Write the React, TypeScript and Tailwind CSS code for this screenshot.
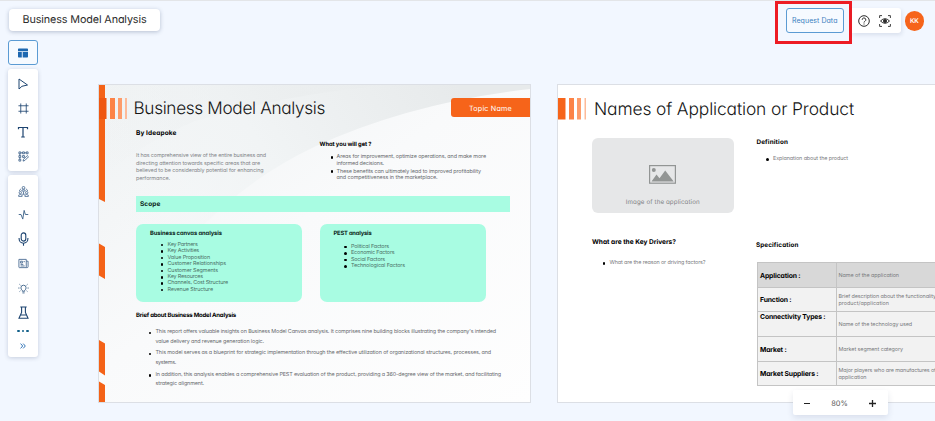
import { useLayoutEffect, useRef, useState, type ReactNode } from "react";
import clsx from "clsx";

type LineProps = { children: string; w: number; className?: string };

/** One line of text, tracked so that it spans the given width. */
function Line({ children, w, className }: LineProps) {
  const ref = useRef<HTMLSpanElement>(null);
  const [spacing, setSpacing] = useState(0);
  useLayoutEffect(() => {
    const el = ref.current;
    if (!el) return;
    el.style.letterSpacing = "0px";
    const natural = el.getBoundingClientRect().width;
    const next = (w - natural) / children.length;
    el.style.letterSpacing = `${next}px`;
    setSpacing(next);
  }, [children, w]);
  return (
    <div className={clsx("whitespace-nowrap", className)}>
      <span ref={ref} className="inline-block align-top" style={{ letterSpacing: spacing }}>
        {children}
      </span>
    </div>
  );
}

type Row = [string, number];

function Bullet({ lines, className, gap = "w-[6px]" }: { lines: Row[]; className: string; gap?: string }) {
  return (
    <li className={clsx("flex", className)}>
      <span className={clsx("-ml-[0.500px] flex h-[1lh] shrink-0 items-center pr-[0.500px]", gap)}>
        <span className="size-[2.600px] rounded-full bg-black" />
      </span>
      <div>
        {lines.map(([t, w]) => (
          <Line key={t} w={w}>{t}</Line>
        ))}
      </div>
    </li>
  );
}

function Icon({ children, className, size = "size-3" }: { children: ReactNode; className?: string; size?: string }) {
  return (
    <svg viewBox="0 0 12 12" fill="none" stroke="currentColor" strokeWidth="1" className={clsx("shrink-0", size, className)}>
      {children}
    </svg>
  );
}

function Tool({ h, children }: { h: string; children: ReactNode }) {
  return <button className={clsx("flex w-full shrink-0 items-center justify-center", h)}>{children}</button>;
}

function Sidebar() {
  return (
    <nav className="flex w-[30px] shrink-0 flex-col text-[#1d4470]">
      <button className="flex h-[25px] items-center justify-center rounded-[3px] border border-[#5b9bd3] bg-[#f6faff] text-[#1d67b0]">
        <svg viewBox="0 0 10 10" fill="currentColor" className="size-[10px]">
          <path d="M0 1.200Q0 .5.7.5h8.600q.7 0 .7.7v2H0zM0 4h3.800v5.500H.7Q0 9.500 0 8.800zM4.700 4H10v4.800q0 .7-.7.7H4.700z" />
        </svg>
      </button>

      <div className="mt-1 flex h-[102px] flex-col rounded-[3px] bg-white pt-[3px] shadow-[0_1px_4px_rgba(40,60,100,0.22)]">
        <Tool h="h-6">
          <Icon><path d="M2 1v10l2.900-2.700L10.500 7z" strokeLinejoin="round" /></Icon>
        </Tool>
        <Tool h="h-6">
          <Icon size="size-[11px]"><path d="M3 .5v11M9 .5v11M.5 3h11M.5 9h11" strokeWidth=".9" /></Icon>
        </Tool>
        <Tool h="h-6">
          <Icon><path d="M1.500 3.300V1.500h9v1.800M6 1.500v9.500M4.200 11h3.600" strokeWidth="1.200" /></Icon>
        </Tool>
        <Tool h="h-6">
          <Icon size="size-[11px]" className="text-[#3a5f88]">
            <path d="M1 1h2v2H1zM5 1h2v2H5zM9 1h2v2H9zM1 5h2v2H1zM1 9h2v2H1zM5 5h2v2H5zM3 2h2M7 2h2M2 3v2M2 7v2" strokeWidth=".9" />
            <path d="M5.500 11l.6-2 4-4 1.400 1.300-4 4z" strokeWidth=".9" />
          </Icon>
        </Tool>
      </div>

      <div className="mt-1 flex h-[182px] flex-col rounded-[3px] bg-white pt-[4px] shadow-[0_1px_4px_rgba(40,60,100,0.22)]">
        <Tool h="h-[24px]">
          <Icon className="text-[#4f7096]" size="size-[11px]">
            <circle cx="6" cy="1.900" r="1.400" />
            <circle cx="2.500" cy="7.300" r="1.300" />
            <circle cx="9.500" cy="7.300" r="1.300" />
            <path d="M4 5.500q0-1.700 2-1.700t2 1.700zM.7 11.400V10q1.800-1.500 3.800 0v1.400zM7.500 11.400V10q1.800-1.500 3.800 0v1.400zM3.500 3Q1.500 4 1.500 5.500M8.500 3q2 1 2 2.500M4.500 9h3M6 5.800V9" strokeWidth=".9" />
          </Icon>
        </Tool>
        <Tool h="h-[23px]">
          <Icon className="text-[#3d6289]" size="size-[11px]"><path d="M.8 6h2.500L5.200 11 6.700 1.500 8 6h3.200" /></Icon>
        </Tool>
        <Tool h="h-[25px]">
          <svg viewBox="0 0 12 15" fill="none" stroke="currentColor" strokeWidth="1.200" className="h-[14px] w-[11px]">
            <rect x="3.500" y=".8" width="5" height="9" rx="2.500" />
            <path d="M1.200 6.500v.8a4.800 4.800 0 0 0 9.600 0v-.8M6 12.200V14.800" />
          </svg>
        </Tool>
        <Tool h="h-[25px]">
          <Icon className="text-[#4f7096]" size="size-[11px]">
            <path d="M1 1.500h8v9H1.500Q1 10.500 1 10zM9 3.500h2v6q0 1-1 1H9M2.800 3.500h2v2h-2zM2.800 7h3M2.800 8.700h4.500M6 4h1.500" />
          </Icon>
        </Tool>
        <Tool h="h-[24px]">
          <Icon className="text-[#3d6289]" size="size-[11px]">
            <path d="M4.700 9V8Q3.200 7 3.200 5.200a2.800 2.800 0 0 1 5.600 0Q8.800 7 7.300 8v1zM4.800 10.800h2.400M.3 5.500h1.300M10.400 5.500h1.300M1.600 1.400l1 1M10.400 1.400l-1 1M1.700 9.300l.9-.8M10.300 9.300l-.9-.8" />
          </Icon>
        </Tool>
        <Tool h="h-[24px]">
          <svg viewBox="0 0 11 13" fill="none" stroke="currentColor" strokeWidth="1.100" className="h-[13px] w-[11px]">
            <path d="M2.300 1h6.400M3.600 1v5.500L1 12.200h9L7.400 6.500V1M2.300 9h6.400" />
          </svg>
        </Tool>
        <Tool h="h-[14px]">
          <span className="flex gap-[2px]">
            <i className="size-[2.400px] rounded-full bg-[#12608a]" />
            <i className="size-[2.400px] rounded-full bg-[#12608a]" />
            <i className="size-[2.400px] rounded-full bg-[#12608a]" />
          </span>
        </Tool>
        <Tool h="h-[16px]">
          <svg viewBox="0 0 6 6" fill="none" stroke="#1d67b0" strokeWidth=".9" className="size-[6px]">
            <path d="M.6.6 2.700 3 .6 5.400M3.200.6 5.300 3 3.200 5.400" />
          </svg>
        </Tool>
      </div>
    </nav>
  );
}

const canvasItems: Row[] = [
  ["Key Partners", 30],
  ["Key Activities", 31.5],
  ["Value Proposition", 42.5],
  ["Customer Relationships", 58.5],
  ["Customer Segments", 50.5],
  ["Key Resources", 35.5],
  ["Channels, Cost Structure", 60.5],
  ["Revenue Structure", 45.5],
];

const pestItems: Row[] = [
  ["Political Factors", 38],
  ["Economic Factors", 43.5],
  ["Social Factors", 34],
  ["Technological Factors", 54],
];

const briefItems: Row[][] = [
  [
    ["This report offers valuable insights on Business Model Canvas analysis. It comprises nine building blocks illustrating the company's intended", 340.5],
    ["value delivery and revenue generation logic.", 108.5],
  ],
  [
    ["This model serves as a blueprint for strategic implementation through the effective utilization of organizational structures, processes, and", 335.5],
    ["systems.", 20.5],
  ],
  [
    ["In addition, this analysis enables a comprehensive PEST evaluation of the product, providing a 360-degree view of the market, and facilitating", 345.5],
    ["strategic alignment.", 48.5],
  ],
];

function SlideOne() {
  return (
    <section className="relative mt-[44px] h-[319px] w-[433px] shrink-0 overflow-hidden border border-[#dcdfe5] bg-[#fafbfc]">
      <svg viewBox="0 0 431 317" className="absolute inset-0 h-full w-full">
        <defs>
          <linearGradient id="sheet" x1="0" y1="0" x2="1" y2="1">
            <stop offset="0" stopColor="#eff2f3" />
            <stop offset=".45" stopColor="#f9fafb" />
            <stop offset="1" stopColor="#fefefe" />
          </linearGradient>
          <linearGradient id="swoosh" gradientUnits="userSpaceOnUse" x1="60" y1="200" x2="360" y2="0">
            <stop offset="0" stopColor="#f2f5f6" stopOpacity="0" />
            <stop offset=".45" stopColor="#f1f4f5" />
            <stop offset="1" stopColor="#e7eaeb" />
          </linearGradient>
          <linearGradient id="corner" gradientUnits="userSpaceOnUse" x1="0" y1="110" x2="200" y2="0">
            <stop offset="0" stopColor="#eef1f2" stopOpacity="0" />
            <stop offset="1" stopColor="#eaedee" />
          </linearGradient>
        </defs>
        <rect width="431" height="317" fill="url(#sheet)" />
        <path d="M0 0H431V4Q310 18 215 62 110 112 40 220H0z" fill="url(#swoosh)" />
        <path d="M0 0H300Q205 5 96 36 40 60 6 90H0z" fill="url(#corner)" opacity=".7" />
        <g fill="#f46217">
          <path d="M0 0h6v117l-6-3zM0 158.500l6 3.500v32l-6-3.500zM0 255l6 3.500v32L0 286.500zM0 296.500l6 3.500v18H0z" />
        </g>
        <path d="M0 13h7.500v21H0z" fill="#ef5711" />
        <path d="M11 13h5v21h-5z" fill="#fc8347" />
        <path d="M19 13h4v21h-4z" fill="#fd9c6b" />
        <path d="M26 13h2v21h-2z" fill="#fdbb9a" />
      </svg>

      <div className="relative flex h-full flex-col">
        <div className="flex h-[35px] items-start pt-[11px] pl-[34.500px]">
          <Line w={191.5} className="pt-px text-[17.200px]/[24px] font-light text-[#151515]">Business Model Analysis</Line>
          <div className="mt-[2px] ml-auto flex h-[19px] w-[79.500px] items-center rounded-l-[3px] bg-[#f6641a] pl-[18.500px]">
            <Line w={43} className="pt-[2px] text-[7.200px]/[10px] text-white">Topic Name</Line>
          </div>
        </div>

        <div className="flex h-[76px] pl-[37px]">
          <div className="w-[183.500px]">
            <Line w={40.5} className="mt-[9px] text-[6.500px]/[8px] font-bold text-black">By Ideapoke</Line>
            <div className="mt-[16px] text-[5.400px]/[7.700px] text-[#808386]">
              <Line w={130}>It has comprehensive view of the entire business and</Line>
              <Line w={124}>directing attention towards specific areas that are</Line>
              <Line w={127.5}>believed to be considerably potential for enhancing</Line>
              <Line w={34}>performance.</Line>
            </div>
          </div>
          <div>
            <Line w={52} className="mt-[21px] text-[5.800px]/[8px] font-bold text-black">What you will get ?</Line>
            <ul className="mt-[5px] flex flex-col gap-[1.500px] pl-[11.500px] text-[#66696c]">
              <Bullet
                className="text-[5.400px]/[6.500px]"
                lines={[["Areas for improvement, optimize operations, and make more", 149.5], ["informed decisions.", 47.5]]}
              />
              <Bullet
                className="text-[5.400px]/[6.500px]"
                lines={[["These benefits can ultimately lead to improved profitability", 144.5], ["and competitiveness in the marketplace.", 101]]}
              />
            </ul>
          </div>
        </div>

        <div className="ml-[37px] h-4 w-[373.500px] bg-[#a8fce2] pt-1 pl-1">
          <Line w={20.5} className="text-[6.500px]/[8px] font-bold text-[#0d1f1a]">Scope</Line>
        </div>

        <div className="mt-3 ml-[37px] flex gap-[17.500px]">
          <div className="h-[77.500px] w-[166px] rounded-[7px] bg-[#a8fce2] pt-[6px] pl-[14px]">
            <Line w={72} className="text-[5.800px]/[8px] font-bold text-[#0d1f1a]">Business canvas analysis</Line>
            <ul className="mt-[4px] pl-[11px] text-[#4a6f64]">
              {canvasItems.map((row) => (
                <Bullet key={row[0]} gap="w-[7px]" className="text-[5.400px]/[6.400px]" lines={[row]} />
              ))}
            </ul>
          </div>
          <div className="h-[77.500px] w-[166px] rounded-[7px] bg-[#a8fce2] pt-[6px] pl-[14px]">
            <Line w={38} className="text-[5.800px]/[8px] font-bold text-[#0d1f1a]">PEST analysis</Line>
            <ul className="mt-[6px] pl-[11px] text-[#4a6f64]">
              {pestItems.map((row) => (
                <Bullet key={row[0]} gap="w-[7px]" className="text-[5.400px]/[6.400px]" lines={[row]} />
              ))}
            </ul>
          </div>
        </div>

        <Line w={100} className="mt-[10.500px] ml-[37px] text-[6px]/[8px] font-bold text-black">Brief about Business Model Analysis</Line>
        <ul className="mt-[8px] ml-[50px] flex flex-col gap-[2.100px] text-[#66696c]">
          {briefItems.map((lines) => (
            <Bullet key={lines[0][0]} gap="w-[7px]" className="text-[5.400px]/[9.600px]" lines={lines} />
          ))}
        </ul>
      </div>
    </section>
  );
}

const specRows: { label: Row; value: Row[]; box: string; top?: boolean }[] = [
  { label: ["Application :", 40.5], value: [["Name of the application", 60.5]], box: "h-[25px] bg-[#d8d8d8]" },
  { label: ["Function :", 31.5], value: [["Brief description about the functionality", 97.5], ["product/application", 50.5]], box: "h-[24px] bg-[#f2f2f2]" },
  { label: ["Connectivity Types :", 65.5], value: [["Name of the technology used", 73.5]], box: "h-[25px] bg-[#f2f2f2]", top: true },
  { label: ["Market :", 26.5], value: [["Market segment category", 64.5]], box: "h-[25px] bg-[#f2f2f2]" },
  { label: ["Market Suppliers :", 58.5], value: [["Major players who are manufactures of", 97.5], ["application", 28]], box: "h-[24px] bg-[#f2f2f2]" },
];

function SlideTwo() {
  return (
    <section className="relative mt-[44px] ml-[26px] h-[319px] w-[433px] shrink-0 overflow-hidden border border-[#dcdfe5] bg-white">
      <svg viewBox="0 0 29 22" className="absolute top-[13px] left-0 h-[22px] w-[29px]">
        <path d="M0 0h7.500v21.500H0z" fill="#f6641a" />
        <path d="M11 0h5v21.500h-5z" fill="#fc8347" />
        <path d="M19 0h4v21.500h-4z" fill="#fd9c6b" />
        <path d="M26.500 0H28v21.500h-1.500z" fill="#fdbb9a" />
      </svg>

      <Line w={260} className="pt-[13px] pl-[36px] text-[17.400px]/[24px] font-light text-[#151515]">Names of Application or Product</Line>

      <div className="flex pl-[33.500px]">
        <div className="w-[165px] shrink-0">
          <div className="mt-[16px] flex h-[75px] w-[142.500px] flex-col items-center rounded-[6px] bg-[#e6e7e8]">
            <svg viewBox="0 0 27 19" className="mt-[26.500px] h-[19px] w-[27px]">
              <rect x=".6" y=".6" width="25.800" height="17.600" fill="none" stroke="#929594" strokeWidth="1.200" />
              <circle cx="4.800" cy="5" r="2" fill="#929594" />
              <path d="M2.500 16.500 7.500 9.500l3 3.700 5.700-7.700 8.500 11z" fill="#929594" />
            </svg>
            <Line w={74} className="mt-[14px] text-[6.200px]/[9px] text-[#7e8183]">Image of the application</Line>
          </div>
          <Line w={84} className="mt-[25px] pl-[0.500px] text-[6.600px]/[8px] font-bold text-black">What are the Key Drivers?</Line>
          <ul className="mt-[14px] pl-[11.500px] text-[#77797c]">
            <Bullet gap="w-[7px]" className="text-[5.400px]/[7px]" lines={[["What are the reason or driving factors?", 96]]} />
          </ul>
        </div>

        <div className="shrink-0">
          <Line w={31.5} className="mt-[15.500px] text-[6.300px]/[8px] font-bold text-black">Definition</Line>
          <ul className="mt-[10.500px] pl-[10px] text-[#77797c]">
            <Bullet gap="w-[7px]" className="text-[5.400px]/[7px]" lines={[["Explanation about the product", 75]]} />
          </ul>
          <Line w={42.5} className="mt-[78px] -ml-[0.500px] text-[6.300px]/[8px] font-bold text-black">Specification</Line>
          <div className="mt-[13px] w-[221px] border-t border-l border-[#c4c4c4]">
            {specRows.map(({ label, value, box, top }) => (
              <div key={label[0]} className={clsx("flex border-b border-[#c4c4c4]", box)}>
                <div className={clsx("flex w-[79px] border-r border-[#c4c4c4] pl-[2.500px]", top ? "items-start" : "items-center")}>
                  <Line w={label[1]} className="text-[6.800px]/[9px] font-bold text-black">{label[0]}</Line>
                </div>
                <div className="flex flex-col justify-center pt-[2px] pl-[2px] text-[5.400px]/[6.800px] text-[#77797c]">
                  {value.map(([t, w]) => (
                    <Line key={t} w={w}>{t}</Line>
                  ))}
                </div>
              </div>
            ))}
          </div>
        </div>
      </div>
    </section>
  );
}

function TopBar() {
  return (
    <header className="absolute inset-x-0 top-0 flex items-start border-t border-[#e3e5e8]">
      <div className="mt-[8px] ml-[9px] flex h-[22px] w-[151px] items-center rounded-[4px] bg-white pl-[13.500px] shadow-[0_1px_4px_rgba(40,60,100,0.3)]">
        <Line w={124} className="text-[10.800px]/[16px] text-[#2c2c2c]">Business Model Analysis</Line>
      </div>
      <div className="ml-[615px] h-[43px] w-[76.500px] shrink-0 border-[3px] border-[#ed1c24] pt-[4px] pl-[8px]">
        <button className="flex h-[25px] w-[58px] items-center rounded-[3px] border border-[#5b9bd3] bg-[#f6faff] pl-[5px]">
          <Line w={45.5} className="text-[7px]/[10px] text-[#3c80c0]">Request Data</Line>
        </button>
      </div>
      <div className="mt-[7px] flex h-[25px] w-[49px] items-center gap-[9px] rounded-r-[3px] bg-white pl-[6px] text-[#2b2b2b] shadow-[1px_2px_4px_rgba(40,60,100,0.12)]">
        <Icon>
          <circle cx="6" cy="6" r="5.300" />
          <path d="M4.200 4.800a1.800 1.800 0 1 1 2.700 1.500Q6 6.800 6 7.500M6 8.500v1" />
        </Icon>
        <Icon>
          <path d="M.6 3V.6H3M9 .6h2.400V3M11.400 9v2.400H9M3 11.400H.6V9" strokeWidth=".9" />
          <path d="M1.500 6Q6 1.400 10.500 6 6 10.600 1.500 6z" />
          <circle cx="6" cy="6" r="1.500" fill="currentColor" />
        </Icon>
      </div>
      <div className="mt-[10px] ml-[4px] flex size-[19.500px] items-center justify-center rounded-full bg-[#f6641a]">
        <Line w={8.5} className="text-[6.400px]/[8px] font-semibold text-white">KK</Line>
      </div>
    </header>
  );
}

export default function App() {
  return (
    <div className="relative h-[421px] w-[935px] overflow-hidden bg-[#f2f7ff] pt-[40px] font-['Inter','Open_Sans',sans-serif] [font-feature-settings:'cv11','ss03'] [text-rendering:geometricPrecision]">
      <div className="flex pl-[8px]">
        <Sidebar />
        <div className="flex shrink-0 pl-[60px]">
          <SlideOne />
          <SlideTwo />
        </div>
      </div>
      <TopBar />
      <div className="absolute top-[390px] left-[793px] flex h-[25px] w-[95px] items-center justify-between rounded-[2px] bg-white pt-[2px] pr-3 pl-[11px] text-[#222] shadow-[0_3px_6px_rgba(40,60,100,0.12)]">
        <span className="h-[1.500px] w-[6px] bg-current" />
        <Line w={16.5} className="text-[7.500px]/[10px] text-[#555]">80%</Line>
        <svg viewBox="0 0 7 7" className="size-[7px]" stroke="currentColor" strokeWidth="1.300">
          <path d="M3.500 0v7M0 3.500h7" />
        </svg>
      </div>
    </div>
  );
}
